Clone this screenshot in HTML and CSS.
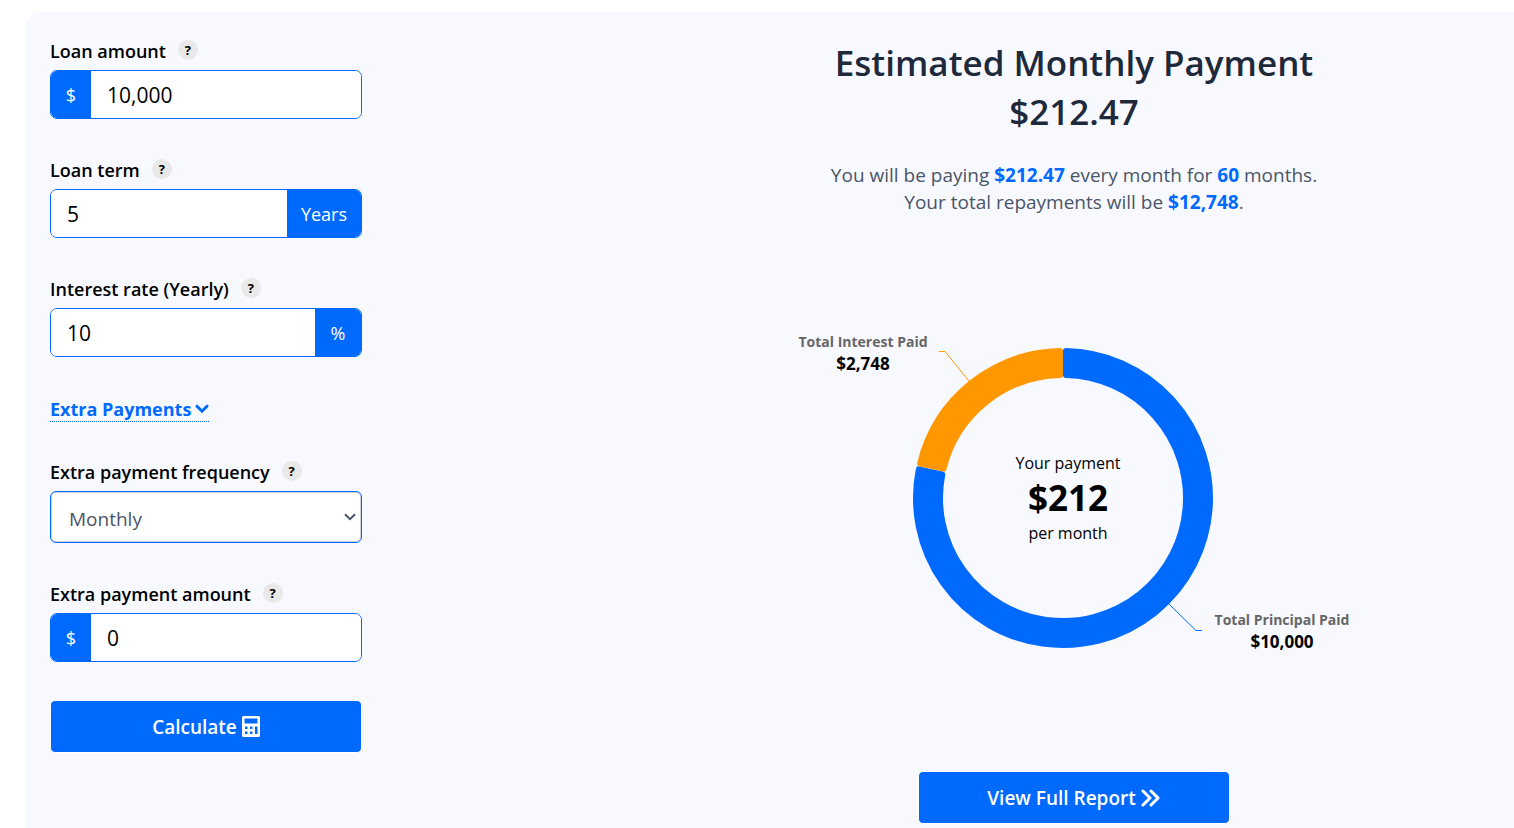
FILE: index.html
```html
<!DOCTYPE html>
<html lang="en">
<head>
<meta charset="utf-8">
<meta name="viewport" content="width=device-width, initial-scale=1">
<title>Loan Calculator</title>
<link rel="stylesheet" href="styles.css">
</head>
<body>
<main class="panel">
  <form class="form">
    <div class="field">
      <div class="field-head"><label for="amount">Loan amount</label><button type="button" class="help" aria-label="About loan amount">?</button></div>
      <div class="group"><span class="addon addon-symbol">$</span><input id="amount" type="text" value="10,000"></div>
    </div>
    <div class="field">
      <div class="field-head"><label for="term">Loan term</label><button type="button" class="help" aria-label="About loan term">?</button></div>
      <div class="group"><input id="term" type="text" value="5"><span class="addon">Years</span></div>
    </div>
    <div class="field">
      <div class="field-head"><label for="rate">Interest rate (Yearly)</label><button type="button" class="help" aria-label="About interest rate">?</button></div>
      <div class="group"><input id="rate" type="text" value="10"><span class="addon addon-percent">%</span></div>
    </div>
    <a class="toggle" href="#extra">Extra Payments<svg class="chevron" viewBox="0 0 14 10" aria-hidden="true"><path d="M2 2.2 7 7.2 12 2.2"/></svg></a>
    <div class="field" id="extra">
      <div class="field-head"><label for="frequency">Extra payment frequency</label><button type="button" class="help" aria-label="About payment frequency">?</button></div>
      <div class="select-wrap">
        <select id="frequency"><option>Monthly</option><option>Yearly</option></select>
        <svg class="select-arrow" viewBox="0 0 12 8" aria-hidden="true"><path d="M1 1.2 6 6.2 11 1.2"/></svg>
      </div>
    </div>
    <div class="field">
      <div class="field-head"><label for="extra-amount">Extra payment amount</label><button type="button" class="help" aria-label="About payment amount">?</button></div>
      <div class="group"><span class="addon addon-symbol">$</span><input id="extra-amount" type="text" value="0"></div>
    </div>
    <button type="submit" class="action">Calculate
      <svg class="icon-calc" viewBox="0 0 18 21" aria-hidden="true"><path fill="#fff" fill-rule="evenodd" d="M1.5 0h15Q18 0 18 1.500v18q0 1.500-1.500 1.500h-15Q0 21 0 19.500v-18Q0 0 1.500 0ZM2.500 2.500v5h13v-5ZM3 10.500v2.500h2.500v-2.500ZM8 10.500v2.500h2.500v-2.500ZM3 15.500v2.500h2.500v-2.500ZM8 15.500v2.500h2.500v-2.500ZM13 10.500v7.500h2.500v-7.500Z"/></svg>
    </button>
  </form>

  <section class="result">
    <h1>Estimated Monthly Payment<br>$212.47</h1>
    <p class="summary">You will be paying <b>$212.47</b> every month for <b>60</b> months.<br>Your total repayments will be <b>$12,748</b>.</p>
    <svg class="chart" viewBox="-300 -178 600 360" role="img" aria-label="Payment breakdown">
      <g transform="translate(-11 0)">
        <path class="arc principal" d="M3-146.970A147 147 0 1 1-144.190-28.620L-120.740-23.470A123 123 0 1 0 3-122.960Z"/>
        <path class="arc interest" d="M-142.900-34.480A147 147 0 0 1-3-146.970V-122.960A123 123 0 0 0-119.450-29.330Z"/>
        <path class="line interest" d="M-124-146.500H-118L-94-117"/>
        <path class="line principal" d="M106 106 133 132.500H139"/>
        <text class="name" x="-200" y="-151">Total Interest Paid</text>
        <text class="value" x="-200" y="-128">$2,748</text>
        <text class="name" x="219" y="127">Total Principal Paid</text>
        <text class="value" x="219" y="150">$10,000</text>
        <text class="note" x="5" y="-29">Your payment</text>
        <text class="total" x="5" y="13">$212</text>
        <text class="note" x="5" y="41">per month</text>
      </g>
    </svg>
    <button type="button" class="action">View Full Report
      <svg class="icon-next" viewBox="0 0 20 18" aria-hidden="true"><path d="M2 2 9 9 2 16M10 2 17 9 10 16"/></svg>
    </button>
  </section>
</main>
</body>
</html>
```
FILE: styles.css
```css
* { box-sizing: border-box; }

body {
  margin: 0;
  padding: 12px 0 0 25px;
  background: #fff;
  color: #000;
  font-family: "Open Sans", "Noto Sans", sans-serif;
  font-size: 18px;
}

.panel {
  display: flex;
  justify-content: space-between;
  min-height: calc(100vh - 12px);
  padding: 25px 25px 4px;
  background: #f8f9ff;
  border-radius: 16px 0 0 0;
}

.form { width: 312px; flex: none; }

.field { margin-bottom: 37px; }

.field-head {
  display: flex;
  align-items: flex-start;
  gap: 12px;
  height: 33px;
  padding-top: 3px;
  font-weight: 600;
  line-height: 22px;
}

.help {
  width: 20px;
  height: 20px;
  padding: 0;
  border: 0;
  border-radius: 50%;
  background: #e9e9e9;
  color: #000;
  font: 700 13px/20px "Open Sans", sans-serif;
}

.group {
  display: flex;
  height: 49px;
  border: 1px solid #006aff;
  border-radius: 7px;
  background: #fff;
  overflow: hidden;
}

.group input {
  flex: 1;
  min-width: 0;
  padding: 0 16px;
  border: 0;
  background: #fff;
  color: #000;
  font: 21px "Open Sans", sans-serif;
  outline: 0;
}

.addon {
  display: flex;
  align-items: center;
  justify-content: center;
  padding: 0 14px;
  background: #006aff;
  color: #fff;
}

.addon-symbol { width: 40px; }
.addon-percent { width: 46px; }

.toggle {
  display: flex;
  align-items: center;
  gap: 4px;
  width: fit-content;
  height: 25px;
  margin: 40px 0 36px;
  border-bottom: 1px dotted #006aff;
  color: #006aff;
  font-weight: 700;
  text-decoration: none;
}

.chevron { width: 14px; height: 10px; }
.chevron path { fill: none; stroke: #006aff; stroke-width: 3; stroke-linecap: round; }

.select-wrap { display: grid; align-items: center; }

.select-wrap > * { grid-area: 1 / 1; }

.select-wrap select {
  width: 100%;
  height: 52px;
  padding: 4px 18px 0;
  border: 1px solid #006aff;
  border-radius: 6px;
  appearance: none;
  background: #fff;
  box-shadow: inset 0 0 0 1px #cbd0dc;
  color: #4a5568;
  font: 19px "Open Sans", sans-serif;
}

.select-arrow {
  width: 12px;
  height: 8px;
  margin-right: 6px;
  justify-self: end;
  pointer-events: none;
}
.select-arrow path { fill: none; stroke: #4a5568; stroke-width: 2; }

.action {
  display: flex;
  align-items: center;
  justify-content: center;
  gap: 5px;
  width: 312px;
  height: 53px;
  border: 1px solid #fff;
  border-radius: 5px;
  background: #006aff;
  color: #fff;
  font: 600 19px "Open Sans", sans-serif;
}

.form .action { margin-top: 38px; }

.icon-calc { width: 18px; height: 21px; }
.icon-next { width: 20px; height: 18px; }
.icon-next path { fill: none; stroke: #fff; stroke-width: 3; stroke-linecap: round; stroke-linejoin: round; }

.result {
  display: flex;
  flex-direction: column;
  align-items: center;
  width: 830px;
  padding-top: 1px;
  text-align: center;
}

.result h1 {
  margin: 0;
  color: #1e293b;
  font-size: 35px;
  font-weight: 600;
  line-height: 49px;
}

.summary {
  margin: 26px 0 104px;
  color: #4a5568;
  font-size: 19px;
  line-height: 27px;
}
.summary b { color: #006aff; }

.chart { width: 600px; margin-bottom: 91px; }
.chart text { text-anchor: middle; }
.arc { stroke-width: 6; stroke-linejoin: round; }
.arc.principal { fill: #006aff; stroke: #006aff; }
.arc.interest { fill: #ff9800; stroke: #ff9800; }
.line { fill: none; stroke-width: 1; }
.line.principal { stroke: #006aff; }
.line.interest { stroke: #ff9800; }
.name { fill: #666; font-size: 14px; font-weight: 700; }
.value { font-size: 17px; font-weight: 700; }
.note { font-size: 16px; }
.total { font-size: 35px; font-weight: 700; }
```
